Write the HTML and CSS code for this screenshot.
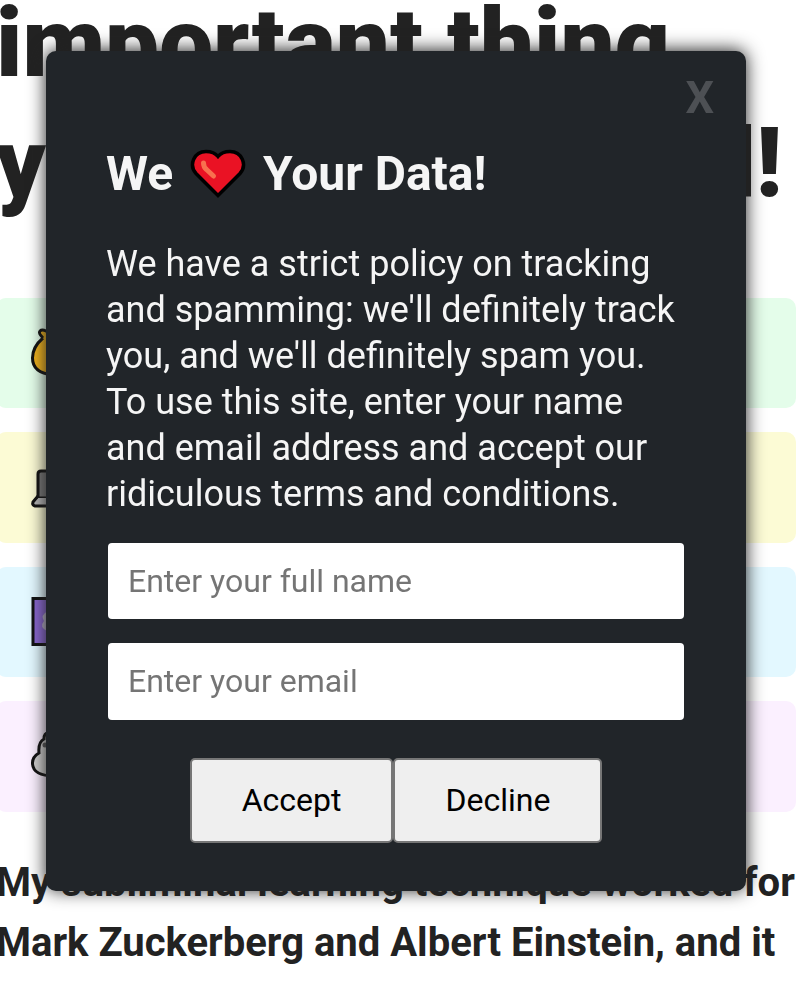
FILE: index.html
```html
<!DOCTYPE html>
<html lang="en">
<head>
    <meta charset="UTF-8">
    <title>We love your data</title>
    <link rel="stylesheet" href="styles.css">
</head>
<body>
    <main>
        <h1>important thing<br><span class="second-line">you've ever heard!</span></h1>

        <div class="list-item green">
            <svg width="56" height="56" viewBox="0 0 56 56">
                <path d="M13 10q-5-5-3-7 2-2 6 0 8-3 14 0 8-3 7 3l-5 5q14 9 14 20 0 16-23 16Q2.500 45 2.500 30 2.500 19 13 10" fill="#f1b31c" stroke="#111" stroke-width="3"/>
            </svg>
        </div>
        <div class="list-item yellow">
            <svg width="56" height="56" viewBox="0 0 56 56">
                <path d="M8 12q0-3 3-3h34q3 0 3 3v24H8z" fill="#777" stroke="#111" stroke-width="3"/>
                <path d="M8 36h41l5 5q1 3-2 3H5q-4-1-2-4z" fill="#b5b5b5"/>
                <path d="M8 34l-5 6q-1 3 2 4h48q3-1 1-4l-5-6" fill="none" stroke="#111" stroke-width="3"/>
            </svg>
        </div>
        <div class="list-item blue">
            <svg width="56" height="56" viewBox="0 0 56 56">
                <path d="M3 1.500h50v46H3z" fill="#8967d0" stroke="#111" stroke-width="3"/>
                <path d="M18 14q-8 4-4 10-5 6 3 10l14-9z" fill="#b7b0c7"/>
            </svg>
        </div>
        <div class="list-item pink">
            <svg width="56" height="56" viewBox="0 0 56 56">
                <path d="M18 2q-4 0-4 6-6 3-5 14-7 4-6.500 11 1 12 22 12h18V2z" fill="#d0cfce" stroke="#111" stroke-width="3"/>
                <circle cx="15" cy="14" r="2.500" fill="#555"/>
            </svg>
        </div>

        <h2>My subliminal learning technique worked for Mark Zuckerberg and Albert Einstein, and it</h2>
    </main>

    <div class="modal" id="modal">
        <div class="modal-inner">
            <div class="close-modal-btn-container">
                <button class="close-modal-btn" id="modal-close-btn" disabled>X</button>
            </div>
            <h3>We
                <svg class="heart" width="56" height="50" viewBox="0 0 56 50">
                    <path d="M28 46.500 6 24.500C-1.500 16 4 2.500 16 2.500q8 0 12 5 4-5 12-5c12 0 17.500 13.500 10 22z" fill="#ea1224" stroke="#000" stroke-width="3.500" stroke-linejoin="miter"/>
                    <path d="M13.500 14q0 4 3 6.500l7 6.500" fill="none" stroke="#f8704f" stroke-width="5" stroke-linecap="round" stroke-linejoin="round"/>
                </svg>
                Your Data!</h3>
            <p>We have a strict policy on tracking and spamming: we'll definitely track you, and we'll definitely spam you. To use this site, enter your name and email address and accept our ridiculous terms and conditions.</p>
            <form id="consent-form">
                <input type="text" name="fullName" placeholder="Enter your full name">
                <input type="email" name="email" placeholder="Enter your email">
                <div class="modal-choice-btns">
                    <button type="submit" class="modal-btn">Accept</button>
                    <button type="button" class="modal-btn decline">Decline</button>
                </div>
            </form>
        </div>
    </div>
</body>
</html>
```

FILE: styles.css
```css
html, body {
    margin: 0;
    padding: 0;
}

body {
    font-family: Roboto, sans-serif;
    color: #222;
    background: #fff;
    height: 984px;
    overflow: hidden;
}

main {
    width: 800px;
    margin-left: -4px;
}

h1 {
    margin: -17px 0 75px;
    font-size: 96px;
    line-height: 120px;
    font-weight: 900;
    white-space: nowrap;
}

.second-line {
    letter-spacing: 0.13px;
}

h2 {
    margin: 41px 0 0;
    font-size: 40px;
    line-height: 60px;
    font-weight: 700;
}

.list-item {
    box-sizing: border-box;
    height: 110.4px;
    margin-bottom: 24px;
    padding: 30px 34px;
    border-radius: 10px;
}

.list-item svg {
    display: block;
    overflow: visible;
}

.green {
    background: #e4fdea;
}

.yellow {
    background: #fcfbd5;
}

.blue {
    background: #e3f8ff;
}

.pink {
    background: #fbf0ff;
}

.modal {
    position: fixed;
    top: 51px;
    left: 46px;
    box-sizing: border-box;
    width: 700px;
    height: 840px;
    padding: 21px 60px;
    border-radius: 10px;
    background: #212529;
    color: #f5f5f5;
    box-shadow: 0 -1px 18px #222;
}

.close-modal-btn-container {
    display: flex;
    justify-content: flex-end;
    margin-right: -30px;
}

.close-modal-btn {
    padding: 0 2px;
    border: none;
    background: none;
    color: #4d5054;
    font-family: Roboto, sans-serif;
    font-size: 45px;
    font-weight: 700;
    line-height: 52px;
}

h3 {
    margin: 19px 0 36px;
    font-size: 48px;
    line-height: 62px;
}

.heart {
    margin: 0 5px;
    vertical-align: -9px;
}

p {
    margin: 0 0 26px;
    font-size: 36px;
    line-height: 46px;
}

form {
    display: flex;
    flex-direction: column;
}

input {
    box-sizing: border-box;
    width: 576px;
    height: 76.4px;
    margin: 0 0 24px 2px;
    padding: 0 20px 1px;
    border: none;
    border-radius: 4px;
    font-family: Roboto, sans-serif;
    font-size: 32px;
}

input::placeholder {
    color: #757575;
}

.modal-choice-btns {
    display: flex;
    justify-content: center;
    margin-top: 14px;
}

.modal-btn {
    padding: 0 50px;
    height: 85px;
    border: 2px solid #767676;
    border-radius: 5px;
    background: #efefef;
    color: #000;
    font-family: Roboto, sans-serif;
    font-size: 32px;
}
```
